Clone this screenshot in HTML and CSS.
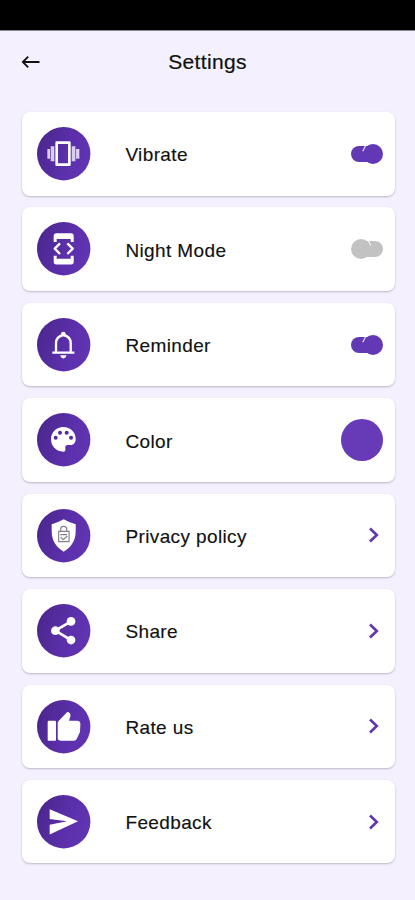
FILE: index.html
```
<!DOCTYPE html>
<html lang="en">
<head>
<meta charset="utf-8">
<title>Settings</title>
<link rel="stylesheet" href="styles.css">
</head>
<body>
<svg class="defs" aria-hidden="true"><defs><linearGradient id="disc" x1="0" y1="0" x2="1" y2="0.3"><stop offset="0" stop-color="#49258a"/><stop offset="0.7" stop-color="#5c30ac"/><stop offset="1" stop-color="#6034b0"/></linearGradient></defs></svg>
<div class="status"></div>
<header class="header">
  <svg class="back" viewBox="0 0 20 14"><path d="M18.5 7H2M7.2 1.7 1.8 7l5.4 5.3"/></svg>
  <h1>Settings</h1>
</header>
<main class="list">
  <div class="card">
    <svg class="icon" viewBox="22 22 160 160"><circle class="disc" cx="102" cy="102" r="80"/><path class="soft" d="M63 80h11v45H63zM126 80h11v45h-11zM53 88h8v29h-8zM139 88h10v29h-10z"/><path class="line" d="M81 69h38v66H81z" stroke-width="8"/></svg>
    <span class="label">Vibrate</span>
    <svg class="toggle" viewBox="0 0 32 22"><rect x="0" y="3" width="29" height="16" rx="8"/><circle cx="22" cy="11" r="10"/><path class="glint" d="M11.8 8.2 14.7 2.5"/></svg>
  </div>
  <div class="card">
    <svg class="icon" viewBox="22 22 160 160"><circle class="disc" cx="102" cy="102" r="80"/><path class="fill" d="M80 56h44q8 0 8 8v18h-9v-9H81v9h-9V64q0-8 8-8zM72 123h9v9h42v-9h9v18q0 8-8 8H80q-8 0-8-8z"/><path class="line" d="M91 86 75 102l16 16M113 86l16 16-16 16" stroke-width="7"/></svg>
    <span class="label">Night Mode</span>
    <svg class="toggle off" viewBox="0 0 32 22"><rect x="3" y="3" width="29" height="16" rx="8"/><circle cx="10" cy="11" r="10"/><path class="glint" d="M19.7 7.5 17.3 2.5"/></svg>
  </div>
  <div class="card">
    <svg class="icon" viewBox="22 22 160 160"><circle class="disc" cx="102" cy="102" r="80"/><path class="line" d="M79 124V98q0-21 22-25 22 4 22 25v26M68 126h66" stroke-width="7"/><path class="fill" d="M94 74v-4q0-7 7-7t7 7v4zM92 134h18q-1 9-9 9t-9-9z"/></svg>
    <span class="label">Reminder</span>
    <svg class="toggle" viewBox="0 0 32 22"><rect x="0" y="3" width="29" height="16" rx="8"/><circle cx="22" cy="11" r="10"/><path class="glint" d="M11.8 8.2 14.7 2.5"/></svg>
  </div>
  <div class="card">
    <svg class="icon" viewBox="22 22 160 160"><circle class="disc" cx="102" cy="102" r="80"/><path class="fill" d="M101 64c-21 0-37 16-37 37s16 37 37 37c5 0 7-3 6-9-1-7 1-11 7-11h9c9 0 15-8 15-18 0-20-16-36-37-36z"/><g class="dot"><circle cx="78" cy="96" r="6"/><circle cx="91" cy="81" r="6"/><circle cx="111" cy="81" r="6"/><circle cx="124" cy="96" r="6"/></g></svg>
    <span class="label">Color</span>
    <span class="swatch"></span>
  </div>
  <div class="card">
    <svg class="icon" viewBox="22 22 160 160"><circle class="disc" cx="102" cy="102" r="80"/><path class="fill" d="M102 53q17 10 36 15v20c0 28-12 48-36 62-24-14-36-34-36-62V68q19-5 36-15z"/><path class="lock" d="M87 89h31v31H87zM93 88V81q0-7 9-7t9 7v7M92 99h20M93 106l7 8 13-11"/></svg>
    <span class="label">Privacy policy</span>
    <svg class="chevron" viewBox="0 0 12 16"><path d="m2 1.5 6.8 6.5L2 14.5"/></svg>
  </div>
  <div class="card">
    <svg class="icon" viewBox="22 22 160 160"><circle class="disc" cx="102" cy="102" r="80"/><path class="line" d="M124 74 77 102l47 28" stroke-width="8"/><g class="fill"><circle cx="124" cy="74" r="13"/><circle cx="77" cy="102" r="13"/><circle cx="124" cy="130" r="13"/></g></svg>
    <span class="label">Share</span>
    <svg class="chevron" viewBox="0 0 12 16"><path d="m2 1.5 6.8 6.5L2 14.5"/></svg>
  </div>
  <div class="card">
    <svg class="icon" viewBox="22 22 160 160"><circle class="disc" cx="102" cy="102" r="80"/><path class="fill" d="M57 84h19q3 0 3 3v54q0 3-3 3H57q-3 0-3-3V87q0-3 3-3zM84 91q0-3 2-5l26-27q2-2 5 0c6 4 6 8 5 12l-4 13h24q10 0 10 10l-1 22q0 3-2 6l-8 17q-3 5-8 5H94q-10 0-10-8z"/></svg>
    <span class="label">Rate us</span>
    <svg class="chevron" viewBox="0 0 12 16"><path d="m2 1.5 6.8 6.5L2 14.5"/></svg>
  </div>
  <div class="card">
    <svg class="icon" viewBox="22 22 160 160"><circle class="disc" cx="102" cy="102" r="80"/><path class="fill" d="M60 65 145 101 60 140v-29l52-10-52-7z"/></svg>
    <span class="label">Feedback</span>
    <svg class="chevron" viewBox="0 0 12 16"><path d="m2 1.5 6.8 6.5L2 14.5"/></svg>
  </div>
</main>
</body>
</html>
```
FILE: styles.css
```
* { box-sizing: border-box; }
body {
  margin: 0;
  height: 900px;
  overflow: hidden;
  background: #f4f0fd;
  color: #111;
  font-family: "Liberation Sans", Arial, sans-serif;
}
.defs { display: block; width: 0; height: 0; }
.status { height: 31px; background: #000; border-bottom: 1px solid #8b8990; }
.header {
  display: grid;
  grid-template-columns: 20px 1fr 20px;
  align-items: center;
  height: 62px;
  padding: 0 21px;
}
.back { width: 20px; height: 14px; margin-top: -1px; fill: none; stroke: #111; stroke-width: 1.8; }
.header h1 {
  margin: 0;
  font-size: 21px;
  font-weight: 400;
  letter-spacing: 0.35px;
  text-align: center;
  -webkit-text-stroke: 0.2px #111;
}
.list {
  display: flex;
  flex-direction: column;
  gap: 11.93px;
  padding: 19px 20.5px 0 21.5px;
}
.card {
  display: flex;
  align-items: center;
  height: 83.5px;
  padding: 0 11.5px 0 15.5px;
  border-radius: 8px;
  background: #fff;
  box-shadow: 0 1px 2px rgba(60, 50, 80, 0.3);
}
.icon { flex: none; width: 53.4px; height: 53.4px; overflow: visible; }
.disc { fill: url(#disc); }
.fill { fill: #fff; }
.soft { fill: #d9cdf0; }
.line { fill: none; stroke: #fff; stroke-linejoin: round; }
.dot { fill: #54299f; }
.lock { fill: none; stroke: #85818c; stroke-width: 3.5; }
.label {
  flex: 1;
  margin: 3px 0 0 35px;
  font-size: 19px;
  letter-spacing: 0.38px;
  white-space: nowrap;
  -webkit-text-stroke: 0.15px #111;
}
.toggle { flex: none; width: 32px; height: 22px; overflow: visible; fill: #6238b5; }
.toggle.off { fill: #c2c2c2; }
.glint { fill: none; stroke: #fff; stroke-width: 1.2; opacity: 0.85; }
.swatch { flex: none; width: 42px; height: 42px; border-radius: 50%; background: #673ab7; }
.chevron {
  flex: none;
  width: 12px;
  height: 16px;
  margin-right: 3px;
  fill: none;
  stroke: #6036b0;
  stroke-width: 2.6;
}
```
